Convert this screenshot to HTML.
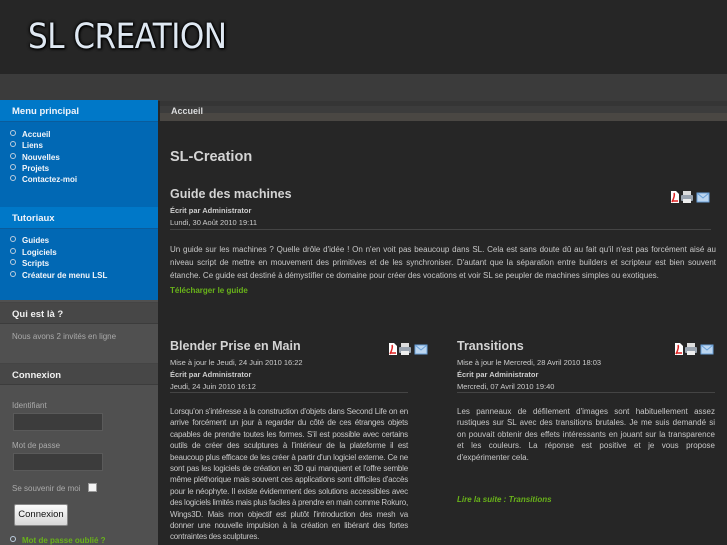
<!DOCTYPE html>
<html><head><meta charset="utf-8"><style>
*{margin:0;padding:0;box-sizing:border-box}
html,body{width:727px;height:545px;overflow:hidden}
body{background:#262626;font-family:"Liberation Sans",sans-serif;position:relative}
.a{position:absolute;white-space:nowrap}
.logo{left:28px;top:17px;font-family:"DejaVu Sans Condensed","DejaVu Sans",sans-serif;font-size:34.5px;color:#dfe8f2;text-shadow:0 0 3px #000,0 0 3px #000,1px 1px 2px #000;letter-spacing:-0.5px}
.side{left:0;top:100px;width:158px;height:445px;background:#505050}
.blue{left:0;top:100px;width:158px;height:200px;background:#0168b4}
.bh{left:0;width:158px;height:22px;background:#0078c8;border-bottom:1px solid #0a5c9c;color:#f0f4fa;font-weight:bold;font-size:9.5px;padding:6px 0 0 12px}
.gh{left:0;width:158px;height:22px;background:#474747;border-bottom:1px solid #3c3c3c;border-top:1px solid #444;color:#f0f0f0;font-weight:bold;font-size:9.5px;padding:6px 0 0 12px}
.li{left:10px;font-size:8px;font-weight:bold;color:#f4f6fa}
.li:before{content:"";display:inline-block;width:4px;height:4px;border:1px solid #bcd;border-radius:50%;margin-right:6px;vertical-align:1px}
.g{color:#aaa;font-size:8px}
.in{left:13px;width:90px;height:18px;background:#3c3c3c;border:1px solid #5a5a5a}
.m{color:#ccc;font-size:7.5px}
.mb{color:#ccc;font-size:7.5px;font-weight:bold}
.t{color:#d4d4d4;font-weight:bold}
.p{color:#c8c8c8;font-size:8px;white-space:normal;text-align:justify}
.hr{height:1px;background:#444}
.grn{color:#69b31a;font-weight:bold;font-size:8px}
</style></head><body>
<div class="a" style="left:0;top:0;width:727px;height:74px;background:#262626"></div>
<div class="a logo">SL CREATION</div>
<div class="a" style="left:0;top:74px;width:727px;height:27px;background:#3b3b3b"></div>
<div class="a" style="left:160px;top:101px;width:567px;height:5px;background:#353535"></div>
<div class="a" style="left:160px;top:106px;width:567px;height:7px;background:#3c3c3c"></div>
<div class="a" style="left:160px;top:113px;width:567px;height:8px;background:#4a4743"></div>
<div class="a" style="left:171px;top:106px;color:#ddd;font-weight:bold;font-size:9px">Accueil</div>

<div class="a side"></div>
<div class="a blue"></div>
<div class="a bh" style="top:100px">Menu principal</div>
<div class="a li" style="top:130px">Accueil</div>
<div class="a li" style="top:141px">Liens</div>
<div class="a li" style="top:153px">Nouvelles</div>
<div class="a li" style="top:164px">Projets</div>
<div class="a li" style="top:175px">Contactez-moi</div>
<div class="a bh" style="top:207px">Tutoriaux</div>
<div class="a li" style="top:236px">Guides</div>
<div class="a li" style="top:248px">Logiciels</div>
<div class="a li" style="top:259px">Scripts</div>
<div class="a li" style="top:271px">Créateur de menu LSL</div>
<div class="a gh" style="top:302px">Qui est là ?</div>
<div class="a g" style="left:12px;top:332px">Nous avons 2 invités en ligne</div>
<div class="a gh" style="top:363px">Connexion</div>
<div class="a g" style="left:12px;top:401px">Identifiant</div>
<div class="a in" style="top:413px"></div>
<div class="a g" style="left:12px;top:441px">Mot de passe</div>
<div class="a in" style="top:453px"></div>
<div class="a g" style="left:12px;top:484px">Se souvenir de moi</div>
<div class="a" style="left:88px;top:483px;width:9px;height:9px;background:#f4f4f4;border:1px solid #999"></div>
<div class="a" style="left:14px;top:504px;width:54px;height:22px;background:linear-gradient(#fafafa,#d8d8d8);border:1px solid #888;border-radius:2px;font-size:9.5px;color:#111;text-align:center;line-height:20px">Connexion</div>
<div class="a li grn" style="top:536px;color:#69b31a">Mot de passe oublié ?</div>

<div class="a t" style="left:170px;top:149px;font-size:14.5px">SL-Creation</div>
<div class="a t" style="left:170px;top:187px;font-size:12.5px">Guide des machines</div>
<svg class="a" style="left:666px;top:190px" width="44" height="14"><path d="M5 1h5l3 3v9H5z" fill="#fff"/><path d="M6 12c2-4 3-7 2-9M6 11h6" stroke="#d22" stroke-width="1.5" fill="none"/><rect x="17" y="1" width="8" height="4" fill="#ddd"/><rect x="15" y="5" width="12" height="6" rx="1" fill="#9aa4b0"/><rect x="17" y="9" width="8" height="4" fill="#eee"/><rect x="31" y="3" width="12" height="9" fill="#bcd6f0" stroke="#6aa0d8"/><path d="M31 3l6 5 6-5" stroke="#6aa0d8" fill="none"/></svg>
<div class="a mb" style="left:170px;top:206px">Écrit par Administrator</div>
<div class="a m" style="left:170px;top:218px">Lundi, 30 Août 2010 19:11</div>
<div class="a hr" style="left:170px;top:229px;width:541px"></div>
<div class="a p" style="left:170px;top:243px;width:546px;line-height:13px">Un guide sur les machines ? Quelle drôle d'idée ! On n'en voit pas beaucoup dans SL. Cela est sans doute dû au fait qu'il n'est pas forcément aisé au niveau script de mettre en mouvement des primitives et de les synchroniser. D'autant que la séparation entre builders et scripteur est bien souvent étanche. Ce guide est destiné à démystifier ce domaine pour créer des vocations et voir SL se peupler de machines simples ou exotiques.</div>
<div class="a grn" style="left:170px;top:286px">Télécharger le guide</div>

<div class="a t" style="left:170px;top:339px;font-size:12.5px">Blender Prise en Main</div>
<svg class="a" style="left:384px;top:342px" width="44" height="14"><path d="M5 1h5l3 3v9H5z" fill="#fff"/><path d="M6 12c2-4 3-7 2-9M6 11h6" stroke="#d22" stroke-width="1.5" fill="none"/><rect x="17" y="1" width="8" height="4" fill="#ddd"/><rect x="15" y="5" width="12" height="6" rx="1" fill="#9aa4b0"/><rect x="17" y="9" width="8" height="4" fill="#eee"/><rect x="31" y="3" width="12" height="9" fill="#bcd6f0" stroke="#6aa0d8"/><path d="M31 3l6 5 6-5" stroke="#6aa0d8" fill="none"/></svg>
<div class="a m" style="left:170px;top:358px">Mise à jour le Jeudi, 24 Juin 2010 16:22</div>
<div class="a mb" style="left:170px;top:370px">Écrit par Administrator</div>
<div class="a m" style="left:170px;top:382px">Jeudi, 24 Juin 2010 16:12</div>
<div class="a hr" style="left:170px;top:392px;width:238px"></div>
<div class="a p" style="left:170px;top:406px;width:238px;line-height:11.4px;letter-spacing:-0.2px;word-spacing:-0.3px">Lorsqu'on s'intéresse à la construction d'objets dans Second Life on en arrive forcément un jour à regarder du côté de ces étranges objets capables de prendre toutes les formes. S'il est possible avec certains outils de créer des sculptures à l'intérieur de la plateforme il est beaucoup plus efficace de les créer à partir d'un logiciel externe. Ce ne sont pas les logiciels de création en 3D qui manquent et l'offre semble même pléthorique mais souvent ces applications sont difficiles d'accès pour le néophyte. Il existe évidemment des solutions accessibles avec des logiciels limités mais plus faciles à prendre en main comme Rokuro, Wings3D. Mais mon objectif est plutôt l'introduction des mesh va donner une nouvelle impulsion à la création en libérant des fortes contraintes des sculptures.</div>

<div class="a t" style="left:457px;top:339px;font-size:12.5px">Transitions</div>
<svg class="a" style="left:670px;top:342px" width="44" height="14"><path d="M5 1h5l3 3v9H5z" fill="#fff"/><path d="M6 12c2-4 3-7 2-9M6 11h6" stroke="#d22" stroke-width="1.5" fill="none"/><rect x="17" y="1" width="8" height="4" fill="#ddd"/><rect x="15" y="5" width="12" height="6" rx="1" fill="#9aa4b0"/><rect x="17" y="9" width="8" height="4" fill="#eee"/><rect x="31" y="3" width="12" height="9" fill="#bcd6f0" stroke="#6aa0d8"/><path d="M31 3l6 5 6-5" stroke="#6aa0d8" fill="none"/></svg>
<div class="a m" style="left:457px;top:358px">Mise à jour le Mercredi, 28 Avril 2010 18:03</div>
<div class="a mb" style="left:457px;top:370px">Écrit par Administrator</div>
<div class="a m" style="left:457px;top:382px">Mercredi, 07 Avril 2010 19:40</div>
<div class="a hr" style="left:457px;top:392px;width:258px"></div>
<div class="a p" style="left:457px;top:406px;width:258px;line-height:11.4px">Les panneaux de défilement d'images sont habituellement assez rustiques sur SL avec des transitions brutales. Je me suis demandé si on pouvait obtenir des effets intéressants en jouant sur la transparence et les couleurs. La réponse est positive et je vous propose d'expérimenter cela.</div>
<div class="a grn" style="left:457px;top:495px;font-style:italic">Lire la suite : Transitions</div>
</body></html>
